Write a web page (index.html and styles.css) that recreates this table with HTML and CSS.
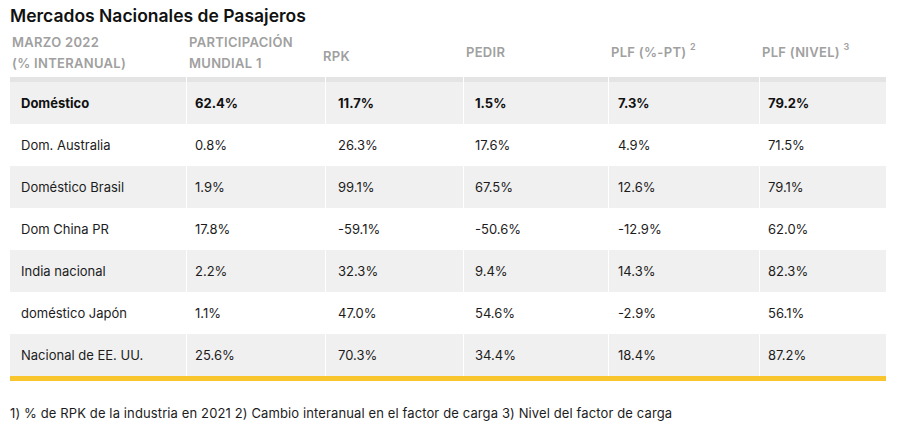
FILE: index.html
```html
<!DOCTYPE html>
<html lang="es">
<head>
<meta charset="utf-8">
<title>Mercados Nacionales de Pasajeros</title>
<link rel="stylesheet" href="styles.css">
</head>
<body>
<div class="wrap">
  <h2 class="title">Mercados Nacionales de Pasajeros</h2>
  <div class="head">
    <div class="hcell">MARZO 2022<br>(% INTERANUAL)</div>
    <div class="hcell">PARTICIPACIÓN<br>MUNDIAL 1</div>
    <div class="hcell low">RPK</div>
    <div class="hcell">PEDIR</div>
    <div class="hcell">PLF (%-PT) <sup>2</sup></div>
    <div class="hcell">PLF (NIVEL) <sup>3</sup></div>
  </div>
  <div class="body">
    <div class="row shade first bold">
      <div class="cell">Doméstico</div><div class="cell">62.4%</div><div class="cell">11.7%</div><div class="cell">1.5%</div><div class="cell">7.3%</div><div class="cell">79.2%</div>
    </div>
    <div class="row">
      <div class="cell">Dom. Australia</div><div class="cell">0.8%</div><div class="cell">26.3%</div><div class="cell">17.6%</div><div class="cell">4.9%</div><div class="cell">71.5%</div>
    </div>
    <div class="row shade">
      <div class="cell">Doméstico Brasil</div><div class="cell">1.9%</div><div class="cell">99.1%</div><div class="cell">67.5%</div><div class="cell">12.6%</div><div class="cell">79.1%</div>
    </div>
    <div class="row">
      <div class="cell">Dom China PR</div><div class="cell">17.8%</div><div class="cell">-59.1%</div><div class="cell">-50.6%</div><div class="cell">-12.9%</div><div class="cell">62.0%</div>
    </div>
    <div class="row shade">
      <div class="cell">India nacional</div><div class="cell">2.2%</div><div class="cell">32.3%</div><div class="cell">9.4%</div><div class="cell">14.3%</div><div class="cell">82.3%</div>
    </div>
    <div class="row">
      <div class="cell">doméstico Japón</div><div class="cell">1.1%</div><div class="cell">47.0%</div><div class="cell">54.6%</div><div class="cell">-2.9%</div><div class="cell">56.1%</div>
    </div>
    <div class="row shade">
      <div class="cell">Nacional de EE. UU.</div><div class="cell">25.6%</div><div class="cell">70.3%</div><div class="cell">34.4%</div><div class="cell">18.4%</div><div class="cell">87.2%</div>
    </div>
  </div>
  <p class="note">1) % de RPK de la industria en 2021 2) Cambio interanual en el factor de carga 3) Nivel del factor de carga</p>
</div>
</body>
</html>
```
FILE: styles.css
```css
html, body {
  margin: 0;
  padding: 0;
  background: #fff;
}
body {
  font-family: Inter, "Liberation Sans", sans-serif;
  color: #1c1c1c;
}
.wrap {
  width: 876px;
  padding: 6px 0 0 10px;
}
.title {
  margin: 0;
  font-size: 17.5px;
  line-height: 20px;
  font-weight: 600;
  color: #111;
}
.head {
  display: grid;
  grid-template-columns: 177px 134px 143px 145px 151px 126px;
  height: 45px;
  margin-top: 6px;
  font-size: 13px;
  line-height: 21px;
  font-weight: 600;
  letter-spacing: 0.3px;
  color: #a0a0a0;
}
.hcell {
  padding: 0 0 0 2px;
  align-self: start;
}
.hcell:nth-child(n+4) {
  padding-top: 10px;
}
.hcell.low {
  padding-top: 14px;
}
.hcell sup {
  font-size: 9px;
  line-height: 0;
  vertical-align: 7px;
  letter-spacing: 0;
}
.body {
  border-bottom: 5px solid #f8c62c;
}
.row {
  display: grid;
  grid-template-columns: 176px 138px 137px 144px 150px 126px;
  column-gap: 1px;
  height: 42px;
  font-size: 13px;
}
.row.first {
  height: 47px;
}
.cell {
  display: flex;
  align-items: center;
  padding-left: 10px;
}
.row.first .cell {
  border-top: 5px solid #e4e4e4;
}
.row.shade .cell {
  background: #f0f0f0;
}
.bold .cell {
  font-weight: 700;
  color: #111;
}
.cell:nth-child(1) { padding-left: 11px; }
.cell:nth-child(2) { padding-left: 8px; }
.cell:nth-child(3) { padding-left: 12px; }
.cell:nth-child(4) { padding-left: 11px; }
.cell:nth-child(5) { padding-left: 9px; }
.cell:nth-child(6) { padding-left: 8px; }
.note {
  margin: 22px 0 0;
  font-size: 13px;
  line-height: 20px;
  letter-spacing: 0.12px;
  color: #1c1c1c;
}
```
